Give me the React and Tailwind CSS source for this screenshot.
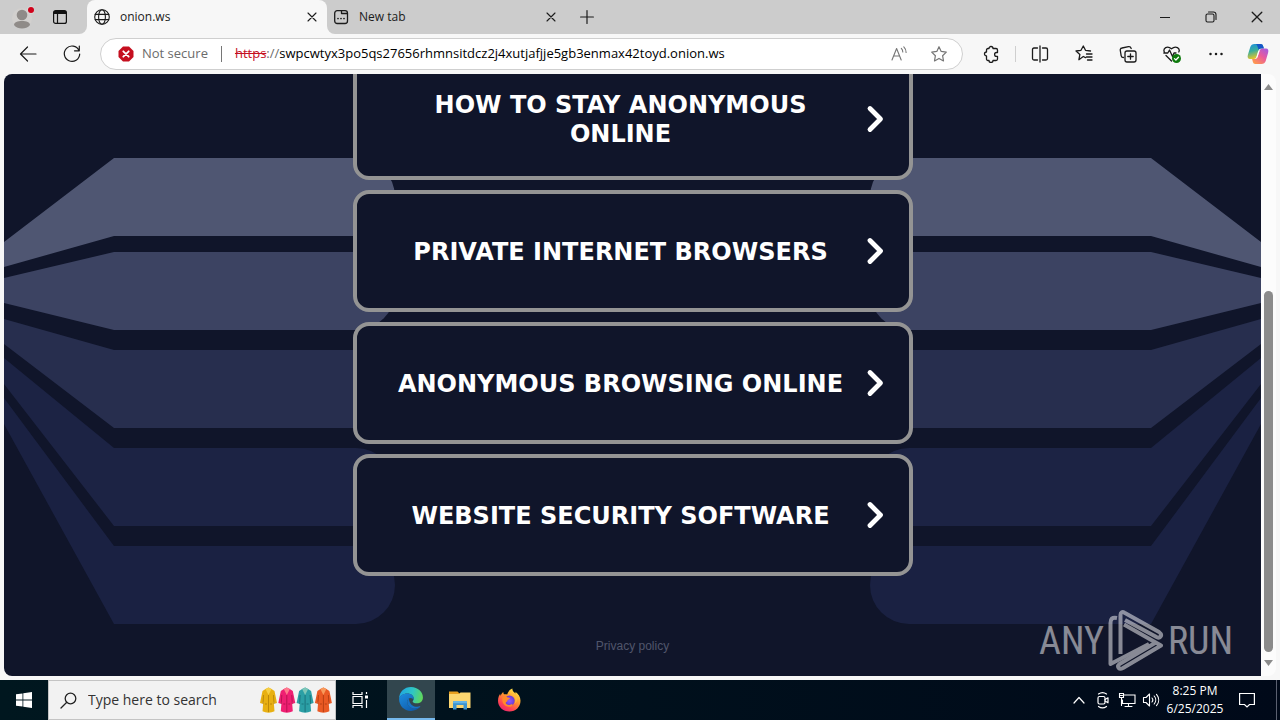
import React, { useState } from "react";

const UI = "font-['Open_Sans','Noto_Sans',sans-serif]";

function Stroke({ size = 18, view = "0 0 18 18", width = 1.2, className = "", children }) {
  return (
    <svg width={size} height={size} viewBox={view} fill="none" stroke="currentColor" strokeWidth={width} strokeLinecap="round" strokeLinejoin="round" className={`block shrink-0 ${className}`} aria-hidden="true">
      {children}
    </svg>
  );
}

const GlobeIcon = () => (
  <Stroke size={16} view="0 0 16 16" width={1.1}>
    <circle cx="8" cy="8" r="7.3" />
    <ellipse cx="8" cy="8" rx="3.4" ry="7.3" />
    <path d="M1.2 5.4h13.6M1.2 10.6h13.6" />
  </Stroke>
);

const NewTabIcon = () => (
  <Stroke size={16} view="0 0 16 16" width={1.3}>
    <rect x="1.7" y="1.7" width="12.8" height="12.8" rx="2.5" />
    <path d="M8.500 2v2.500h5.800" />
    <path d="M5 9.500h.01M8 9.500h.01M11 9.500h.01" strokeWidth="1.700" />
  </Stroke>
);

const CloseIcon = ({ size = 10 }) => (
  <Stroke size={size} view="0 0 10 10" width={1.1}>
    <path d="M1 1l8 8M9 1L1 9" />
  </Stroke>
);

const StarPath = "M9 1.700l2.200 4.700 5.100.7-3.700 3.600.9 5.200L9 13.400l-4.500 2.500.9-5.200L1.700 7.100l5.100-.7z";

function ProfileIcon() {
  return (
    <svg width="24" height="24" viewBox="0 0 24 24" className="block" aria-hidden="true">
      <circle cx="12" cy="13" r="10" fill="#d2d0ce" />
      <circle cx="12" cy="10" r="5.300" fill="#8f8b88" />
      <path d="M4 20c0-2.600 3.500-4 8-4s8 1.400 8 4c-2 2.600-5 3.500-8 3.500S6 22.600 4 20z" fill="#8f8b88" />
      <circle cx="21" cy="5" r="4" fill="#d8d6d4" />
      <circle cx="21" cy="5" r="3" fill="#d0021b" />
    </svg>
  );
}

function CopilotIcon() {
  return (
    <svg width="22" height="22" viewBox="0 0 22 22" className="block" aria-hidden="true">
      <defs>
        <linearGradient id="cpA" x1="0" y1="0" x2="0.300" y2="1">
          <stop offset="0" stopColor="#1b8fe0" />
          <stop offset="0.500" stopColor="#3aae9c" />
          <stop offset="1" stopColor="#e8c52a" />
        </linearGradient>
        <linearGradient id="cpB" x1="1" y1="0" x2="0.200" y2="1">
          <stop offset="0" stopColor="#9b5be8" />
          <stop offset="0.500" stopColor="#ea5a9b" />
          <stop offset="1" stopColor="#ff9a4d" />
        </linearGradient>
      </defs>
      <path d="M7.500 1h6.200c1.400 0 2 .9 2.400 2l.8 2.500h-2.700c-1.500 0-2.300.8-2.800 2.300L9.800 13c-.6 2-1.300 3-3 3H3c-2.200 0-2.800-1.700-2.100-4.300L3.300 4C4 2 5.300 1 7.500 1z" fill="url(#cpA)" />
      <path d="M13.700 1c1.400 0 2 .9 2.400 2l.8 2.500h-2.700c-1.200 0-2 .5-2.500 1.500L10.300 3C9.900 1.800 9.400 1 8.300 1z" fill="#1656c8" />
      <path d="M14.500 21H8.300c-1.400 0-2-.9-2.400-2l-.8-3h2.700c1.500 0 2.300-.8 2.800-2.300L12.200 9c.6-2 1.300-3.500 3-3.500H19c2.200 0 2.800 1.700 2.100 4.300L18.700 18c-.7 2-2 3-4.200 3z" fill="url(#cpB)" />
      <path d="M12.500 8l-2 6.500h-1.200L11.200 8z" fill="#fff" opacity=".8" />
    </svg>
  );
}

function EdgeIcon() {
  return (
    <svg width="26" height="26" viewBox="0 0 24 24" className="block" aria-hidden="true">
      <defs>
        <linearGradient id="edA" x1="0" y1="0.300" x2="1" y2="0.500">
          <stop offset="0" stopColor="#1fa5e3" />
          <stop offset="0.550" stopColor="#2fc6c4" />
          <stop offset="1" stopColor="#60d85b" />
        </linearGradient>
        <linearGradient id="edB" x1="0" y1="0" x2="0.800" y2="1">
          <stop offset="0" stopColor="#1d8ee0" />
          <stop offset="1" stopColor="#0f58a8" />
        </linearGradient>
      </defs>
      <path d="M1 12C1 5.500 6 1 12 1c6.500 0 11 4.700 11 9.500 0 3.600-2.600 5.500-5.600 5.500-2.600 0-3.900-1-3.900-1.700 0-.6 1-1 1-2.800C14.500 9 12 7 8.800 7 4.500 7 1.500 9.500 1 12z" fill="url(#edA)" />
      <path d="M1 12c.5-3 3.800-5 7.800-5 3.200 0 5.700 2 5.700 4.500 0 .6-.1 1.100-.3 1.500-.2-1.300-1.300-2-2.500-2-2 0-3.200 1.700-3.200 3.700 0 3.800 3.400 6 7 6 2 0 3.700-.6 4.900-1.300C18.500 21.500 15.400 23 12 23 5.500 23 1 18 1 12z" fill="url(#edB)" />
      <path d="M10 11.500c-1 .8-1.500 1.900-1.500 3.200 0 3.800 3.400 6 7 6 2 0 3.700-.6 4.900-1.300.4-.3.100-.8-.4-.6-3.500 1.300-9.500-.3-10-7.300z" fill="#1673c6" />
    </svg>
  );
}

function ExplorerIcon() {
  return (
    <svg width="24" height="24" viewBox="0 0 24 24" className="block" aria-hidden="true">
      <path d="M1 3.500h8.500l2 2H22V8H1z" fill="#e8a020" />
      <path d="M1 6h10l1.500-1.500H22.500V20H1z" fill="#fcd670" />
      <path d="M5 21.500v-7c0-1 .6-1.500 1.500-1.500h11c.9 0 1.500.5 1.500 1.500v7h-3.500V17h-7v4.500z" fill="#3e95cf" />
      <path d="M6.500 13h11c.9 0 1.500.5 1.500 1.500v.8H5v-.8c0-1 .6-1.500 1.500-1.500z" fill="#64b5e6" />
    </svg>
  );
}

function FirefoxIcon() {
  return (
    <svg width="24" height="24" viewBox="0 0 24 24" className="block" aria-hidden="true">
      <defs>
        <linearGradient id="ffA" x1="0.800" y1="0" x2="0.200" y2="1">
          <stop offset="0" stopColor="#fff04a" />
          <stop offset="0.400" stopColor="#ff9a2e" />
          <stop offset="0.750" stopColor="#ff4352" />
          <stop offset="1" stopColor="#e5236f" />
        </linearGradient>
        <radialGradient id="ffB">
          <stop offset="0" stopColor="#9059ff" />
          <stop offset="1" stopColor="#6a3ad0" />
        </radialGradient>
      </defs>
      <path d="M12.500 23.500C6 23.500 1 18.800 1 12.700c0-3.200 1.200-5.600 2.200-6.900 0 1 .2 1.600.5 2 .4-1.600 1.300-2.900 2.600-3.800 0 1 .2 1.700.7 2.300 1-.3 2.200-.2 3.200.2C11 3.900 12.600 1.500 15.300.5c.1 2.500 1.500 3.700 3.300 5.100 0-.7-.1-1.200-.3-1.800 3 1.900 5.200 5 5.200 8.900 0 6-4.700 10.800-11 10.800z" fill="url(#ffA)" />
      <circle cx="12.500" cy="12.800" r="5.200" fill="url(#ffB)" />
      <path d="M5.500 9c1.600-1.300 4-.9 5.100.4 1 .2 1.900.2 2.300.6.200.7-1 1.300-2 1.800-.4.400-.3 1-.7 1.500-.6.800-1.600.9-1.500 1.800.1 1 1.700 2.100 3.500 1.900 1.300-.2 2-1 3-.8.800.2.500 1.200-.3 1.700-4.500 2.800-11-1-9.400-8.900z" fill="#ff8a2a" />
      <path d="M14.200 6c2.800 1.200 4.200 3.600 4.200 6.500 0 1.300-.3 2.400-.9 3.300 4-2.300 3.600-8.200-.2-11z" fill="#ffbd3c" opacity=".8" />
    </svg>
  );
}

const coats = [
  ["#e8b012", "#b98408", "#f6cf45"],
  ["#ef1f72", "#b3114f", "#ff7a8c"],
  ["#2b9fa5", "#186f78", "#7fc7b8"],
  ["#ea5a24", "#b23c12", "#f79a5c"],
];

function CoatsIcon() {
  return (
    <svg width="74" height="30" viewBox="0 0 74 30" className="block shrink-0" aria-hidden="true">
      {coats.map(([body, shade, light], i) => (
        <g key={body} transform={`translate(${1 + i * 18.300} 2)`}>
          <path d="M5.500 2L8.500.5 11.500 2l3 2 2.500 12-2.500.8-.8-2.500.8 10c-3.500 1.800-8.500 1.800-12 0l.8-10-.8 2.500L0 16 2.500 4z" fill={body} />
          <path d="M5.500 2L8.500.5 11.500 2 8.500 8z" fill={light} />
          <path d="M8.500 8v17M3.500 8l-.5 9M13.500 8l.5 9M5 17h2M10 17h2" stroke={shade} strokeWidth=".9" fill="none" />
        </g>
      ))}
    </svg>
  );
}

const bands = [
  { top: 84, edge: [168, 193], fill: "#4f5672" },
  { top: 178, edge: [204, 229], fill: "#3c4362" },
  { top: 276, edge: [245, 270], fill: "#272e4e" },
  { top: 374, edge: [284, 310], fill: "#1c2344" },
  { top: 472, edge: [324, 350], fill: "#1a2142" },
];

function BandSet() {
  return bands.map(({ top, edge, fill }) => (
    <path key={top} fill={fill} d={`M0 ${edge[0]}L110 ${top}H352A39 39 0 0 1 352 ${top + 78}H110L0 ${edge[1]}Z`} />
  ));
}

function Backdrop() {
  return (
    <svg viewBox="0 0 1257 602" preserveAspectRatio="none" className="absolute inset-0 h-full w-full" aria-hidden="true">
      <BandSet />
      <g transform="translate(1257 0) scale(-1 1)">
        <BandSet />
      </g>
    </svg>
  );
}

function Watermark() {
  return (
    <div className="pointer-events-none absolute right-7 bottom-1 flex items-center gap-1 font-['Roboto_Condensed','DejaVu_Sans_Condensed',sans-serif] text-[38px] leading-none text-white opacity-50">
      <span>ANY</span>
      <svg width="56" height="62" viewBox="0 0 56 62" fill="none" stroke="currentColor" strokeWidth="4" strokeLinejoin="round" aria-hidden="true">
        <path d="M9 8C4 7 2.500 9 2.500 13V54L41 34" />
        <path d="M12.500 44V5c0-3 2-3.500 4-2.300L51 22c4 3 1.500 7-2.500 5L17 10" />
        <path d="M16 14.500L53 35.500 15 58c-4 2-6.500-1-3.500-4L47 33" />
      </svg>
      <span>RUN</span>
    </div>
  );
}

const topics = [
  "HOW TO STAY ANONYMOUS ONLINE",
  "PRIVATE INTERNET BROWSERS",
  "ANONYMOUS BROWSING ONLINE",
  "WEBSITE SECURITY SOFTWARE",
];

function TopicCard({ title }) {
  return (
    <a href="#topic" className="flex h-[122px] w-full shrink-0 items-center gap-2.5 rounded-2xl border-4 border-[#949494] bg-[#10152a] pr-6 pl-[30px] text-white">
      <span className="flex-1 pt-0.5 text-center font-['Verdana','DejaVu_Sans',sans-serif] text-2xl leading-[29px] font-bold">{title}</span>
      <svg width="20" height="28" viewBox="0 0 20 28" fill="none" stroke="currentColor" strokeWidth="4.800" strokeLinecap="round" strokeLinejoin="round" className="shrink-0" aria-hidden="true">
        <path d="M5 3.500L15.500 14 5 24.500" />
      </svg>
    </a>
  );
}

function IconButton({ label, className = "", children }) {
  return (
    <button type="button" aria-label={label} className={`flex shrink-0 items-center justify-center ${className}`}>
      {children}
    </button>
  );
}

function TabStrip() {
  return (
    <header className="flex h-[34px] shrink-0 bg-[#f7f7f7] text-xs text-[#1b1b1b]">
      <div className="flex w-[87px] shrink-0 items-center gap-3.5 rounded-br-lg bg-[#cccccc] pl-2.5">
        <IconButton label="Profile"><ProfileIcon /></IconButton>
        <IconButton label="Tab actions" className="h-6 w-6">
          <svg width="14" height="14" viewBox="0 0 14 14" className="block" aria-hidden="true">
            <rect x=".6" y=".6" width="12.800" height="12.800" rx="2" fill="none" stroke="#111" strokeWidth="1.200" />
            <path d="M1 1h12v3H1z" fill="#111" />
            <path d="M4.500 4v9" stroke="#111" strokeWidth="1.200" />
          </svg>
        </IconButton>
      </div>
      <div className="w-60 shrink-0 bg-[#cccccc]">
        <div className="flex h-full items-center gap-2.5 rounded-t-lg bg-[#f7f7f7] pr-2.5 pl-[7px]">
          <GlobeIcon />
          <span className="flex-1">onion.ws</span>
          <IconButton label="Close onion.ws"><CloseIcon /></IconButton>
        </div>
      </div>
      <div className="flex min-w-0 flex-1 items-center rounded-bl-lg bg-[#cccccc]">
        <div className="flex w-[235px] shrink-0 items-center gap-2.5 pr-1.5 pl-1.5">
          <NewTabIcon />
          <span className="flex-1">New tab</span>
          <IconButton label="Close New tab"><CloseIcon /></IconButton>
        </div>
        <IconButton label="Open new tab" className="ml-[18px]">
          <Stroke size={14} view="0 0 14 14" width={1.2}><path d="M7 .6v12.800M.6 7h12.800" /></Stroke>
        </IconButton>
        <div className="ml-auto flex h-full">
          <IconButton label="Minimize" className="w-[46px]">
            <Stroke size={10} view="0 0 10 10" width={1}><path d="M0 5.500h10" /></Stroke>
          </IconButton>
          <IconButton label="Restore" className="w-[46px]">
            <Stroke size={12} view="0 0 12 12" width={1.1}>
              <rect x="1" y="3" width="8" height="8" rx="1.500" />
              <path d="M3.500 1h5A2.500 2.500 0 0 1 11 3.500v5" />
            </Stroke>
          </IconButton>
          <IconButton label="Close window" className="w-[46px]"><CloseIcon size={12} /></IconButton>
        </div>
      </div>
    </header>
  );
}

function Toolbar() {
  const [host, setHost] = useState("swpcwtyx3po5qs27656rhmnsitdcz2j4xutjafjje5gb3enmax42toyd.onion.ws");
  return (
    <div className="flex h-10 shrink-0 items-center bg-[#f7f7f7] pr-[11px] pl-[18px] text-[#1b1b1b]">
      <IconButton label="Back" className="mr-6">
        <Stroke size={20} view="0 0 20 20"><path d="M18 10H2.500M9.500 3L2.500 10l7 7" /></Stroke>
      </IconButton>
      <IconButton label="Refresh" className="mr-[18px]">
        <Stroke size={20} view="0 0 20 20"><path d="M17 6.500A7.700 7.700 0 1 0 17.700 10M17.300 2v4.800h-4.800" /></Stroke>
      </IconButton>
      <div className="flex h-8 min-w-0 flex-1 items-center rounded-full border border-[#cfcfcf] bg-white pr-3.5 pl-[17px] text-[13px]">
        <svg width="16" height="16" viewBox="0 0 16 16" className="mr-2 block shrink-0" aria-hidden="true">
          <path d="M5 .5h6L15.500 5v6L11 15.500H5L.5 11V5z" fill="#c50f1f" />
          <path d="M5.300 5.300l5.400 5.400M10.700 5.300l-5.400 5.400" stroke="#fff" strokeWidth="1.800" strokeLinecap="round" />
        </svg>
        <span className="shrink-0 text-[#6b6b6b]">Not secure</span>
        <span className="mx-[13px] h-4 w-px shrink-0 bg-[#767676]" />
        <span className="shrink-0 text-[#c50f1f] line-through">https</span>
        <span className="shrink-0 text-[#6b6b6b]">://</span>
        <input aria-label="Address" value={host} onChange={(e) => setHost(e.target.value)} className="min-w-0 flex-1 bg-transparent text-black outline-none" />
        <IconButton label="Read aloud" className="mr-[22px] text-[#767676]">
          <Stroke size={18} width={1.1}>
            <path d="M2 15L6.600 3.500 11.200 15M3.600 11h6M11.300 3.300c1 1 1.500 2.300 1.500 3.700M13.800 1.800c1.600 1.500 2.300 3.300 2.300 5.700" />
          </Stroke>
        </IconButton>
        <IconButton label="Add to favorites" className="text-[#767676]">
          <Stroke size={18}><path d={StarPath} /></Stroke>
        </IconButton>
      </div>
      <IconButton label="Extensions" className="ml-5">
        <Stroke size={18} width={1.3}>
          <path d="M6 3.500a2 2 0 0 1 4 0h3c.8 0 1.500.6 1.500 1.500v2.500h-1a1.900 1.900 0 0 0 0 3.800h1V14c0 .8-.7 1.500-1.500 1.500h-3a2 2 0 0 1-4 0H5c-.9 0-1.500-.7-1.500-1.500v-3a2 2 0 0 1 0-4V5c0-.9.6-1.500 1.500-1.500z" />
        </Stroke>
      </IconButton>
      <span className="ml-[14px] h-4 w-px shrink-0 bg-[#cfcfcf]" />
      <div className="ml-[15px] flex shrink-0 items-center gap-[26px]">
        <IconButton label="Split screen">
          <Stroke size={18} width={1.3}><path d="M6.500 3H3C2 3 1.500 3.500 1.500 4.500v9c0 1 .5 1.500 1.500 1.500h3.500M11.500 3H15c1 0 1.500.5 1.500 1.500v9c0 1-.5 1.500-1.500 1.500h-3.500M9 1v16" /></Stroke>
        </IconButton>
        <IconButton label="Favorites">
          <Stroke size={18} width={1.3}><path d="M10.500 12.600l-2.200-1.100-4.400 3.200 1-5.300L1 6l5-.7L8.300 1l2.200 4.300 5 .7M11.500 9H17M11.500 12H17M12.500 15H17" /></Stroke>
        </IconButton>
        <IconButton label="Collections">
          <Stroke size={18} width={1.3}>
            <path d="M4.500 12.500C3 12.500 2.500 12 2.200 10.800L1.300 5.500C1 4 1.700 3.200 3 3l6.500-1.300c1.300-.2 2.200.3 2.700 1.800" />
            <rect x="6" y="6" width="11" height="11" rx="2" />
            <path d="M11.500 8.800v5.400M8.800 11.500h5.400" />
          </Stroke>
        </IconButton>
        <IconButton label="Browser essentials">
          <svg width="18" height="18" viewBox="0 0 18 18" fill="none" stroke="currentColor" strokeWidth="1.300" strokeLinecap="round" strokeLinejoin="round" className="block" aria-hidden="true">
            <path d="M1.300 7C-.2 3.500 4 0 8.500 3.800 13 0 17.500 3.500 15.800 7M3 10.500l5.500 5.500M.8 8h4L6.500 5l3 6.500L11 8h2" />
            <circle cx="13.500" cy="13.500" r="4.500" fill="#0e7a0d" stroke="none" />
            <path d="M11.500 13.600l1.400 1.400 2.600-2.700" stroke="#fff" />
          </svg>
        </IconButton>
        <IconButton label="Settings and more">
          <Stroke size={18} width={2.5}><path d="M3.500 9h.01M9 9h.01M14.500 9h.01" /></Stroke>
        </IconButton>
        <IconButton label="Copilot" className="-ml-1"><CopilotIcon /></IconButton>
      </div>
    </div>
  );
}

function Scrollbar() {
  return (
    <div className="flex w-[15px] shrink-0 flex-col items-center rounded-r-lg bg-[#fcfcfc] py-2.5" aria-hidden="true">
      <svg width="9" height="6" viewBox="0 0 9 6"><path d="M4.500 0L9 6H0z" fill="#8b8b8b" /></svg>
      <div className="flex w-[9px] flex-1 flex-col pt-[201px] pb-2">
        <div className="w-full flex-1 rounded-full bg-[#8b8b8b]" />
      </div>
      <svg width="9" height="6" viewBox="0 0 9 6"><path d="M0 0h9L4.500 6z" fill="#8b8b8b" /></svg>
    </div>
  );
}

function Page() {
  return (
    <main className="relative flex min-w-0 flex-1 flex-col items-center justify-end overflow-hidden rounded-l-lg bg-[#10152a]">
      <Backdrop />
      <div className="relative flex w-full max-w-[560px] shrink-0 flex-col gap-2.5">
        {topics.map((title) => <TopicCard key={title} title={title} />)}
      </div>
      <a href="#privacy" className="relative mt-[62px] mb-[22px] shrink-0 font-['Liberation_Sans',sans-serif] text-xs leading-4 text-[#50566c]">Privacy policy</a>
      <Watermark />
    </main>
  );
}

function Taskbar() {
  return (
    <footer className="flex h-10 shrink-0 bg-linear-to-r from-[#00171f] to-[#000919] text-white">
      <IconButton label="Start" className="w-12">
        <svg width="16" height="16" viewBox="0 0 16 16" fill="#fff" className="block" aria-hidden="true">
          <path d="M0 2.300L6.500 1.400v6.200H0zM7.300 1.300L16 0v7.600H7.300zM0 8.400h6.500v6.200L0 13.700zM7.300 8.400H16V16l-8.700-1.300z" />
        </svg>
      </IconButton>
      <label className="flex w-72 shrink-0 items-center border border-[#c4c4c4] bg-[#f2f2f2] pr-0.5 pl-[11px] text-[#222]">
        <Stroke size={17} view="0 0 17 17" width={1.3} className="mr-[11px]"><circle cx="10.500" cy="6.500" r="5.300" /><path d="M6.800 10.200L1 16" /></Stroke>
        <input aria-label="Search" placeholder="Type here to search" className="min-w-0 flex-1 bg-transparent text-sm outline-none placeholder:text-[#333]" />
        <CoatsIcon />
      </label>
      <IconButton label="Task view" className="w-[51px]">
        <Stroke size={18} width={1.2} className="-ml-1">
          <path d="M2 1v2.500h9V1M2 17v-2.500h9V17M2 5.500h9v7H2zM15.500 1v2M15.500 9v8" strokeLinecap="butt" strokeLinejoin="miter" />
          <path d="M14 4.500h3v3h-3z" fill="currentColor" stroke="none" />
        </Stroke>
      </IconButton>
      <IconButton label="Microsoft Edge" className="w-12 border-b-2 border-[#76b9ed] bg-[#32464e]"><EdgeIcon /></IconButton>
      <IconButton label="File Explorer" className="w-[50px]"><ExplorerIcon /></IconButton>
      <IconButton label="Firefox" className="w-12"><FirefoxIcon /></IconButton>
      <div className="ml-auto flex shrink-0 items-center">
        <IconButton label="Show hidden icons" className="w-6">
          <Stroke size={12} view="0 0 12 12"><path d="M1 9l5-5.500L11 9" /></Stroke>
        </IconButton>
        <IconButton label="Meet now" className="w-6">
          <Stroke size={18} width={1.2}>
            <rect x="4" y="5.500" width="7" height="7.500" rx="1.500" />
            <path d="M11 8.500l3-1.700v5l-3-1.700M4.500 3c2.500-1.800 5.500-1.800 8 0M4.500 15.500c2.500 1.800 5.500 1.800 8 0" />
          </Stroke>
        </IconButton>
        <IconButton label="Network" className="w-6">
          <Stroke size={18} width={1.1}>
            <path d="M5.500 4H17v8.500H4.500V9M10.500 12.500v3M7 15.500h7M1.500 2.500h4v4h-4zM3.500 6.500v8M2.500 4.500h2" strokeLinejoin="miter" />
          </Stroke>
        </IconButton>
        <IconButton label="Volume" className="w-6">
          <Stroke size={18} width={1.1}>
            <path d="M1.500 6.500h2.500L7.500 3v12L4 11.500H1.500zM10 7c1 1.200 1 2.800 0 4M12.200 5c2 2.300 2 5.700 0 8M14.500 3.300c2.900 3.400 2.900 8 0 11.400" />
          </Stroke>
        </IconButton>
        <div className="w-16 text-center text-xs leading-[18px]">
          <div>8:25 PM</div>
          <div>6/25/2025</div>
        </div>
        <IconButton label="Notifications" className="w-10">
          <Stroke size={16} view="0 0 16 16"><path d="M.6 1.500h14.800v11H10.500L8 15l-2.500-2.500H.6z" strokeLinejoin="miter" /></Stroke>
        </IconButton>
        <span className="ml-[9px] h-10 w-1 border-l border-[#5a6070]" />
      </div>
    </footer>
  );
}

export default function App() {
  return (
    <div className={`flex h-screen flex-col overflow-hidden bg-[#f7f7f7] ${UI}`}>
      <TabStrip />
      <Toolbar />
      <div className="flex min-h-0 flex-1 px-1 pb-1">
        <Page />
        <Scrollbar />
      </div>
      <Taskbar />
    </div>
  );
}
